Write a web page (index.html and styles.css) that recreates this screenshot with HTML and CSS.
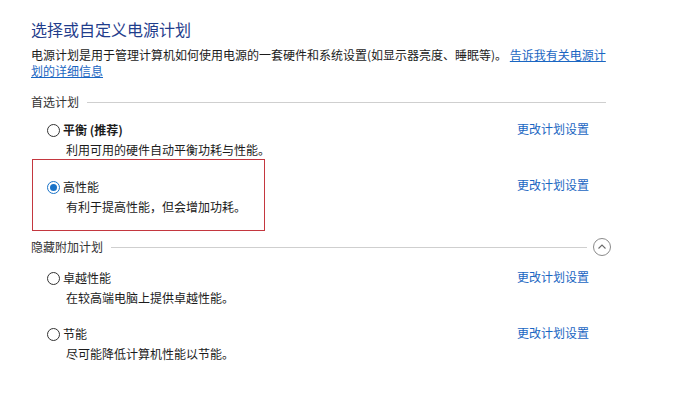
FILE: index.html
```html
<!DOCTYPE html>
<html lang="zh-CN">
<head>
<meta charset="utf-8">
<link rel="stylesheet" href="styles.css">
</head>
<body>
<div class="page">
  <h1 class="title">选择或自定义电源计划</h1>
  <p class="desc">电源计划是用于管理计算机如何使用电源的一套硬件和系统设置(如显示器亮度、睡眠等)。 <a class="help" href="#">告诉我有关电源计<br>划的详细信息</a></p>

  <div class="section-head head-1">
    <span class="section-label">首选计划</span>
    <span class="rule"></span>
  </div>

  <div class="row row-1">
    <div class="plan">
      <div class="plan-title"><span class="radio"></span><span class="bold">平衡 (推荐)</span></div>
      <div class="plan-desc">利用可用的硬件自动平衡功耗与性能。</div>
    </div>
    <a class="change" href="#">更改计划设置</a>
  </div>

  <div class="row row-2">
    <div class="plan selected">
      <div class="plan-title"><span class="radio checked"></span><span>高性能</span></div>
      <div class="plan-desc">有利于提高性能，但会增加功耗。</div>
    </div>
    <a class="change change-boxed" href="#">更改计划设置</a>
  </div>

  <div class="section-head head-2">
    <span class="section-label">隐藏附加计划</span>
    <span class="rule"></span>
    <span class="collapse">
      <svg width="18" height="18" viewBox="0 0 18 18"><circle cx="9" cy="9" r="8.5" fill="#fff" stroke="#8a8a8a" stroke-width="1"/><path d="M5.5 10.5 L9 7 L12.5 10.5" fill="none" stroke="#6a6a6a" stroke-width="1.1"/></svg>
    </span>
  </div>

  <div class="row row-3">
    <div class="plan">
      <div class="plan-title"><span class="radio"></span><span>卓越性能</span></div>
      <div class="plan-desc">在较高端电脑上提供卓越性能。</div>
    </div>
    <a class="change" href="#">更改计划设置</a>
  </div>

  <div class="row row-4">
    <div class="plan">
      <div class="plan-title"><span class="radio"></span><span>节能</span></div>
      <div class="plan-desc">尽可能降低计算机性能以节能。</div>
    </div>
    <a class="change" href="#">更改计划设置</a>
  </div>
</div>
</body>
</html>
```
FILE: styles.css
```css
html, body {
  margin: 0;
  padding: 0;
  background: #ffffff;
}
body {
  font-family: "Noto Sans CJK SC", "Microsoft YaHei", sans-serif;
  font-size: 12px;
  color: #1b1b1b;
}
.page {
  padding: 18px 0 0 31px;
  width: 600px;
}
.title {
  margin: 0;
  font-size: 16px;
  font-weight: normal;
  line-height: 22px;
  color: #1f3d8c;
}
.desc {
  margin: 7px 0 0 0;
  line-height: 16px;
  white-space: nowrap;
}
.help {
  color: #1a66c2;
  text-decoration: underline;
}
.section-head {
  display: flex;
  align-items: center;
  height: 16px;
  line-height: 16px;
  color: #333333;
}
.head-1 {
  margin-top: 15px;
  width: 575px;
}
.head-2 {
  margin-top: 8px;
  width: 580px;
}
.section-label {
  white-space: nowrap;
}
.rule {
  flex: 1;
  height: 1px;
  background: #cfcfcf;
  margin-left: 8px;
}
.collapse {
  display: flex;
  margin-left: 6px;
  width: 18px;
  height: 18px;
}
.row {
  display: grid;
  grid-template-columns: 486px auto;
  align-items: start;
}
.row-1 { margin-top: 11px; }
.row-3 { margin-top: 14px; }
.row-4 { margin-top: 18px; }
.plan {
  padding-left: 16px;
}
.plan.selected {
  width: 217px;
  margin-left: 1px;
  padding: 18px 0 14px 14px;
  border: 1px solid #c4373f;
}
.plan-title {
  display: flex;
  align-items: center;
  height: 18px;
  line-height: 18px;
}
.bold {
  font-weight: bold;
}
.radio {
  box-sizing: border-box;
  width: 13px;
  height: 13px;
  border: 1px solid #333333;
  border-radius: 50%;
  margin-right: 3px;
  display: inline-flex;
  align-items: center;
  justify-content: center;
  background: #fff;
}
.radio.checked {
  border-color: #1a73c8;
}
.radio.checked::after {
  content: "";
  width: 7px;
  height: 7px;
  border-radius: 50%;
  background: #1a73c8;
}
.plan-desc {
  margin-top: 2px;
  padding-left: 19px;
  line-height: 18px;
  white-space: nowrap;
}
.change {
  color: #1a66c2;
  text-decoration: none;
  line-height: 18px;
  margin-top: -1px;
  white-space: nowrap;
}
.change-boxed {
  margin-top: 17px;
}
```
